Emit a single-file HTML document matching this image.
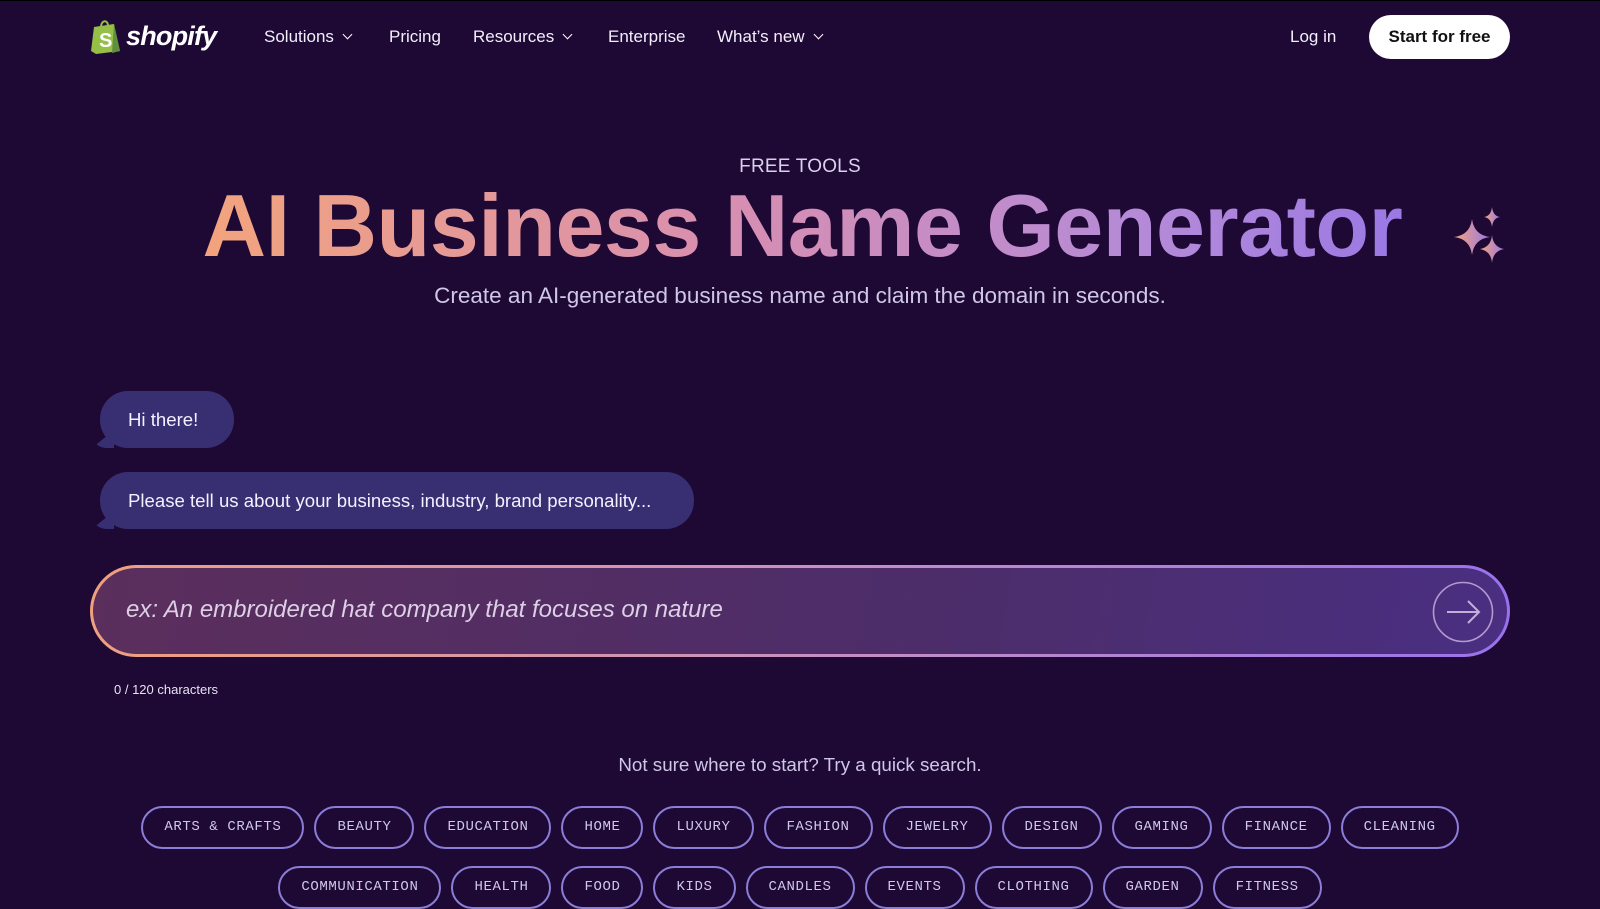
<!DOCTYPE html>
<html><head><meta charset="utf-8"><style>
*{margin:0;padding:0;box-sizing:border-box}
body{width:1600px;height:900px;overflow:hidden;background:#1e0834;font-family:"Liberation Sans",sans-serif;color:#fff;position:relative}
.nav{position:absolute;top:0;left:0;right:0;height:72px;border-top:1px solid #000}
.logo{position:absolute;left:90px;top:17px;display:flex;align-items:center}
.logo span{font-weight:bold;font-style:italic;font-size:27px;margin-left:4px;letter-spacing:-0.8px}
.nl{position:absolute;top:26px;font-size:17px;color:#f2eefa}
.chev{display:inline-block;width:7px;height:7px;border-right:1.8px solid #fff;border-bottom:1.8px solid #fff;transform:rotate(45deg);margin-left:10px;position:relative;top:-4px}
.btn{position:absolute;left:1369px;top:14px;width:141px;height:44px;border-radius:22px;background:#fff;color:#111;font-size:17px;font-weight:bold;text-align:center;line-height:44px}
.ft{position:absolute;top:156px;width:100%;text-align:center;font-size:19px;color:#d9d2ee;letter-spacing:.2px}
h1{position:absolute;top:175px;left:0;width:1600px;text-align:center;font-size:88px;font-weight:bold;letter-spacing:-0.5px;background:linear-gradient(90deg,#f3a47c 12%,#d88fb0 45%,#b48ad8 72%,#9a78e4 88%);-webkit-background-clip:text;background-clip:text;color:transparent;padding-left:5px}
.sub{position:absolute;top:283px;width:100%;text-align:center;font-size:22.5px;color:#cfc6e8}
.bub{position:absolute;left:100px;height:57px;border-radius:28px;background:#382e72;font-size:18.6px;line-height:57px;padding:0 36px 0 28px;color:#f4f0ff}
.bub:before{content:"";position:absolute;left:-8px;bottom:0;width:22px;height:18px;background:#382e72;border-radius:0 0 0 14px;clip-path:polygon(0 100%,100% 0,100% 100%)}
.inp{position:absolute;left:90px;top:565px;width:1420px;height:92px;border-radius:46px;border:3px solid transparent;background:linear-gradient(100deg,#5b2e5c,#4c2d6a 60%,#4a2f82) padding-box,linear-gradient(90deg,#f0a07e,#c890c0 50%,#9a72ec) border-box}
.inp .ph{position:absolute;left:33px;top:28px;font-size:24px;font-style:italic;color:#ddcfe6}
.cnt{position:absolute;left:114px;top:682px;font-size:13px;color:#e8e2f4}
.q{position:absolute;top:754px;width:100%;text-align:center;font-size:18.8px;color:#cfc6e8}
.row{position:absolute;left:0;width:1600px;display:flex;justify-content:center;gap:10px}
.chip{height:43px;border:2px solid #8b7ed8;border-radius:22px;padding:0 21px;font-family:"Liberation Mono",monospace;font-size:14px;line-height:39px;color:#cfc8ea;letter-spacing:.6px}
</style></head><body>
<div class="nav">
<div class="logo"><svg width="32" height="36" viewBox="0 0 32 36"><path d="M4 9 L24 6 L30 33 L6 36 L1 33 Z" fill="#95bf47"/><path d="M24 6 L30 33 L22 35 Z" fill="#5e8e3e"/><path d="M11 9 C11 2 18 1 18 8" stroke="#95bf47" stroke-width="2" fill="none"/><text x="9" y="29" font-family="Liberation Sans" font-weight="bold" font-size="20" fill="#fff">S</text></svg><span>shopify</span></div>
<div class="nl" style="left:264px">Solutions<i class="chev"></i></div>
<div class="nl" style="left:389px">Pricing</div>
<div class="nl" style="left:473px">Resources<i class="chev"></i></div>
<div class="nl" style="left:608px">Enterprise</div>
<div class="nl" style="left:717px">What’s new<i class="chev"></i></div>
<div class="nl" style="left:1290px">Log in</div>
<div class="btn">Start for free</div>
</div>
<div class="ft">FREE TOOLS</div>
<h1>AI Business Name Generator</h1>
<svg style="position:absolute;left:1452px;top:203px" width="64" height="70" viewBox="0 0 60 70"><defs><linearGradient id="g" x1="0" x2="1"><stop offset="0" stop-color="#f3a47c"/><stop offset="1" stop-color="#9a78e4"/></linearGradient></defs><path d="M18 16 Q20 32 36 34 Q20 36 18 52 Q16 36 0 34 Q16 32 18 16Z" fill="url(#g)"/><path d="M38 4 Q39 13 46 14 Q39 15 38 24 Q37 15 30 14 Q37 13 38 4Z" fill="url(#g)"/><path d="M38 32 Q39 44 50 46 Q39 48 38 60 Q37 48 26 46 Q37 44 38 32Z" fill="url(#g)"/></svg>
<div class="sub">Create an AI-generated business name and claim the domain in seconds.</div>
<div class="bub" style="top:391px">Hi there!</div>
<div class="bub" style="top:472px;width:594px">Please tell us about your business, industry, brand personality...</div>
<div class="inp"><div class="ph">ex: An embroidered hat company that focuses on nature</div>
<svg style="position:absolute;right:13px;top:13px" width="62" height="62" viewBox="0 0 62 62"><circle cx="31" cy="31" r="29.5" fill="none" stroke="#b49ad0" stroke-width="1.6"/><path d="M15 31 H47 M36 20 L47 31 L36 42" fill="none" stroke="#c4aedb" stroke-width="2"/></svg></div>
<div class="cnt">0 / 120 characters</div>
<div class="q">Not sure where to start? Try a quick search.</div>
<div class="row" style="top:806px"><div class="chip">ARTS &amp; CRAFTS</div><div class="chip">BEAUTY</div><div class="chip">EDUCATION</div><div class="chip">HOME</div><div class="chip">LUXURY</div><div class="chip">FASHION</div><div class="chip">JEWELRY</div><div class="chip">DESIGN</div><div class="chip">GAMING</div><div class="chip">FINANCE</div><div class="chip">CLEANING</div></div>
<div class="row" style="top:866px"><div class="chip">COMMUNICATION</div><div class="chip">HEALTH</div><div class="chip">FOOD</div><div class="chip">KIDS</div><div class="chip">CANDLES</div><div class="chip">EVENTS</div><div class="chip">CLOTHING</div><div class="chip">GARDEN</div><div class="chip">FITNESS</div></div>
</body></html>
